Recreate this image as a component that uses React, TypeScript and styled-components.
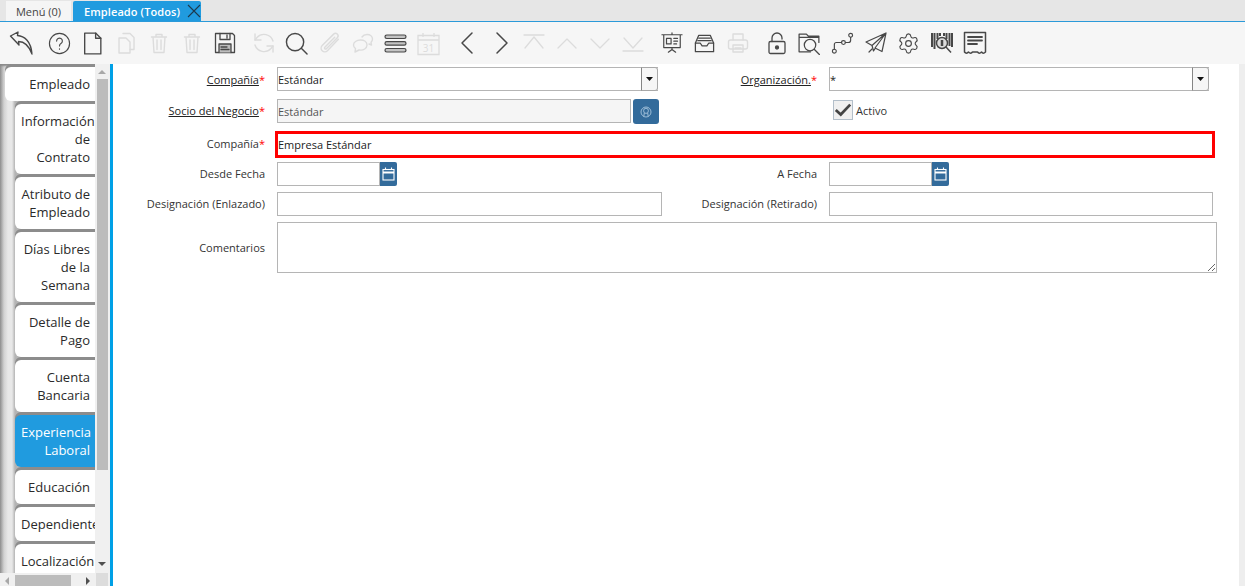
import React from 'react';
import styled, { createGlobalStyle, css } from 'styled-components';
import { Settings } from 'lucide-react';

const GlobalStyle = createGlobalStyle`
  html, body, #root {
    margin: 0;
    height: 100%;
    overflow: hidden;
  }
  body {
    font-family: 'Open Sans', 'Liberation Sans', sans-serif;
    background: #fff;
  }
`;

const Page = styled.div`
  height: 586px;
  display: flex;
  flex-direction: column;
`;

const TabBar = styled.div`
  height: 21px;
  flex: none;
  display: flex;
  align-items: flex-end;
  padding-left: 6px;
  gap: 2px;
  background: #e6e6e6;
  border-bottom: 1px solid #2b9ad9;
`;

const WindowTab = styled.div<{ $active?: boolean }>`
  height: 20px;
  display: flex;
  align-items: center;
  font-size: 11px;
  ${(p) =>
    p.$active
      ? css`
          width: 128px;
          padding-left: 11px;
          box-sizing: border-box;
          background: #209bdf;
          color: #fff;
          font-weight: 600;
          letter-spacing: 0.1px;
          border-radius: 2px 2px 0 0;
        `
      : css`
          width: 65px;
          justify-content: center;
          background: #f5f5f5;
          color: #444;
        `}
`;

const CloseButton = styled.span`
  margin-left: auto;
  display: flex;
  color: #1c3a4d;
`;

const Toolbar = styled.div`
  height: 42px;
  flex: none;
  display: flex;
  align-items: center;
  padding-left: 4px;
  background: #f6f6f6;
`;

const ToolGroup = styled.div`
  display: flex;
  margin-right: 6px;
`;

const ToolButton = styled.span<{ $off?: boolean }>`
  width: 33px;
  height: 34px;
  display: flex;
  align-items: center;
  justify-content: center;
  color: ${(p) => (p.$off ? '#dcdcdc' : '#484848')};
`;

const Main = styled.div`
  flex: 1;
  min-height: 0;
  display: flex;
`;

const Side = styled.div`
  width: 110px;
  flex: none;
  display: grid;
  grid-template-columns: 96px 12px;
  grid-template-rows: 509px 13px;
  background: #f0f0f0;
`;

const TabList = styled.div`
  overflow: hidden;
  box-sizing: border-box;
  padding-top: 3px;
  display: flex;
  flex-direction: column;
  gap: 3px;
  border-right: 1px solid #f0f0f0;
  background: linear-gradient(90deg, #8e8e8e 0, #d2d2d2 4px, #e8e8e8 8px, #e8e8e8 12px, #b4b4b4 15px);
  box-shadow: inset 0 3px 2px -1px #8a8a8a;
`;

const DetailTab = styled.div<{ $active?: boolean; $first?: boolean }>`
  flex: none;
  box-sizing: border-box;
  margin-left: ${(p) => (p.$first ? '5px' : '15px')};
  width: ${(p) => (p.$first ? '90px' : '80px')};
  padding: 8px 5px 8px 6px;
  font-size: 13px;
  line-height: 18px;
  text-align: right;
  border-radius: 6px 0 0 6px;
  background: ${(p) => (p.$active ? '#209bdf' : '#fff')};
  color: ${(p) => (p.$active ? '#fff' : '#2a2a2a')};
  font-weight: ${(p) => (p.$active ? 500 : 400)};
  box-shadow: 0 -3px 0 #8c8c8c;
`;

const VScroll = styled.div`
  display: flex;
  flex-direction: column;
  align-items: center;
  justify-content: space-between;
  position: relative;
  background: #f0f0f0;
  padding: 6px 0 7px;
  box-sizing: border-box;
`;

const VThumb = styled.div`
  position: absolute;
  top: 15px;
  left: 1px;
  width: 11px;
  height: 391px;
  background: #bcbcbc;
`;

const HScroll = styled.div`
  display: flex;
  align-items: center;
  justify-content: space-between;
  position: relative;
  background: #f0f0f0;
  padding: 2px 6px 0 5px;
  box-sizing: border-box;
`;

const HThumb = styled.div`
  position: absolute;
  left: 15px;
  top: 2px;
  width: 56px;
  height: 11px;
  background: #bcbcbc;
`;

const Corner = styled.div`
  background: #dcdcdc;
`;

const Arrow = styled.span<{ $dir: 'up' | 'down' | 'left' | 'right'; $off?: boolean }>`
  width: 0;
  height: 0;
  border: 4px solid transparent;
  ${(p) => {
    const color = p.$off ? '#a8a8a8' : '#505050';
    if (p.$dir === 'up') return `border-bottom-color: ${color}; border-top-width: 0;`;
    if (p.$dir === 'down') return `border-top-color: ${color}; border-bottom-width: 0;`;
    if (p.$dir === 'left') return `border-right-color: ${color}; border-left-width: 0;`;
    return `border-left-color: ${color}; border-right-width: 0;`;
  }}
`;

const Content = styled.div`
  flex: 1;
  min-width: 0;
  border-left: 3px solid #00a0e6;
  border-right: 6px solid #eeeeee;
  padding-top: 3px;
  background: #fff;
`;

const Row = styled.div<{ $after: number }>`
  display: grid;
  grid-template-columns: 164px 385px 167px 1fr;
  align-items: center;
  margin-bottom: ${(p) => p.$after}px;
`;

const Label = styled.label<{ $link?: boolean; $second?: boolean; $raise?: boolean }>`
  font-size: 11px;
  color: #333;
  text-align: right;
  padding-right: 12px;
  padding-bottom: ${(p) => (p.$raise ? '2px' : '0')};
  span:first-child {
    text-decoration: ${(p) => (p.$link ? 'underline' : 'none')};
    color: ${(p) => (p.$link ? '#222' : '#333')};
  }
`;

const Required = styled.span`
  color: #f00;
`;

const Combo = styled.div<{ $width: number }>`
  width: ${(p) => p.$width}px;
  height: 24px;
  box-sizing: border-box;
  display: flex;
  align-items: center;
  border: 1px solid #b5b5b5;
  border-right: none;
  font-size: 11px;
  color: #222;
  > span:first-child {
    flex: 1;
  }
`;

const ComboButton = styled.span`
  width: 17px;
  height: 24px;
  flex: none;
  box-sizing: border-box;
  display: flex;
  align-items: center;
  justify-content: center;
  background: #f6f6f6;
  border: 1px solid #a8a8a8;
  border-left-color: #858585;
  border-radius: 0 3px 3px 0;
`;

const TextField = styled.input<{ $width: number; $locked?: boolean }>`
  width: ${(p) => p.$width}px;
  height: 24px;
  box-sizing: border-box;
  margin: 0;
  padding: 0;
  border: 1px solid #b5b5b5;
  border-radius: 0;
  outline: none;
  font-family: inherit;
  font-size: 11px;
  color: ${(p) => (p.$locked ? '#555' : '#222')};
  background: ${(p) => (p.$locked ? '#f5f5f5' : '#fff')};
`;

const HighlightField = styled.input`
  width: 940px;
  height: 27px;
  margin: 0 0 0 -2px;
  padding: 0;
  box-sizing: border-box;
  border: 3px solid #f00;
  border-radius: 0;
  outline: none;
  font-family: inherit;
  font-size: 11px;
  color: #222;
  background: #fff;
  grid-column: 2 / 5;
`;

const Notes = styled.textarea`
  width: 940px;
  height: 51px;
  display: block;
  margin: 0;
  padding: 0;
  box-sizing: border-box;
  border: 1px solid #b5b5b5;
  border-radius: 0;
  outline: none;
  font-family: inherit;
  font-size: 11px;
  grid-column: 2 / 5;
`;

const Inline = styled.div`
  display: flex;
  align-items: flex-start;
`;

const SearchButton = styled.span`
  width: 26px;
  height: 25px;
  margin-left: 2px;
  display: flex;
  align-items: center;
  justify-content: center;
  background: #336b9b;
  border-radius: 3px;
  color: #a9c6de;
`;

const DateButton = styled.span`
  width: 17px;
  height: 24px;
  flex: none;
  display: flex;
  align-items: center;
  justify-content: center;
  background: #336b9b;
  border-radius: 0 2px 2px 0;
  color: #fff;
`;

const CheckRow = styled.div`
  display: flex;
  align-items: center;
  grid-column: 4;
  margin: 0 0 3px 4px;
  font-size: 11px;
  color: #333;
  gap: 3px;
`;

const CheckBox = styled.span`
  width: 20px;
  height: 20px;
  box-sizing: border-box;
  display: flex;
  align-items: center;
  justify-content: center;
  background: #f0f0f0;
  border: 1px solid #b3bfca;
  color: #444;
`;

type IconProps = { children: React.ReactNode; size?: number; sw?: number };

// line icons share one frame, everything is drawn in a 24 box
const Ico = ({ children, size = 24, sw = 1.4 }: IconProps) => (
  <svg width={size} height={size} viewBox="0 0 24 24" fill="none" stroke="currentColor" strokeWidth={sw} strokeLinecap="round" strokeLinejoin="round">
    {children}
  </svg>
);

const TrashShape = () => (
  <>
    <path d="M4.500 6h15M9 6V3.500h6V6M6 6l1 15.500h10L18 6" />
    <path d="M10 9v9.500M14 9v9.500" />
  </>
);

const tools: { key: string; off?: boolean; icon: React.ReactNode }[][] = [
  [
    {
      key: 'back',
      icon: (
        <svg width="24" height="24" viewBox="0 0 24 24" fill="none" stroke="currentColor" strokeWidth="1.400" strokeLinejoin="round">
          <path d="M1.500 5 9 1l-.5 3.500C15 5 22 10 23 23c-3-8-8-12.500-13.500-12.500l.5 3.500z" />
        </svg>
      ),
    },
  ],
  [
    { key: 'help', icon: <Ico size={23} sw={1.2}><circle cx="12" cy="12" r="10.500" /><path d="M9 9.500a3 3 0 1 1 4.500 2.600c-1 .6-1.500 1.200-1.500 2.400" /><path d="M12 17.500v.4" /></Ico> },
    { key: 'new', icon: <Ico size={25} sw={1.3}><path d="M4.500 2h10.500l5 5v15H4.500z" /><path d="M15 2v5h5" /></Ico> },
    { key: 'copy', off: true, icon: <Ico size={24} sw={1.4}><path d="M9 2.500h7l4 4v12h-4" /><path d="M5 7h7l4 4v11H5z" /></Ico> },
    { key: 'delete', off: true, icon: <Ico size={24}><TrashShape /></Ico> },
    { key: 'deleteAll', off: true, icon: <Ico size={24}><TrashShape /></Ico> },
    { key: 'save', icon: <Ico size={24} sw={1.3}><path d="M2.500 2.500h17l2 2v17h-19z" /><path d="M7 2.500v6h10v-6M14 4v3" /><path d="M6 21.500v-8.500h12v8.500" fill="#bdbdbd" /><path d="M8 16h6M8 18.500h8" /></Ico> },
  ],
  [
    { key: 'refresh', off: true, icon: <Ico size={24} sw={1.4}><path d="M21 10A9.500 9.500 0 0 0 5 6.500L3 9" /><path d="M3 3v6h6" /><path d="M3 14a9.500 9.500 0 0 0 16 3.500l2-2.500" /><path d="M21 21v-6h-6" /></Ico> },
    { key: 'find', icon: <Ico size={23} sw={1.500}><circle cx="10.500" cy="10.500" r="9" /><path d="m17 17 6 6" /></Ico> },
    { key: 'attach', off: true, icon: <Ico size={25} sw={1.400}><path d="m20.500 8-10.500 11a3.500 3.500 0 0 1-5-5L16 3a2.400 2.400 0 0 1 3.500 3.400L9 17a1 1 0 0 1-1.500-1.500L17 6" /></Ico> },
    { key: 'chat', off: true, icon: <Ico size={24} sw={1.400}><path d="M9.500 9c-4 0-7 2.300-7 5 0 1.500.8 2.700 2 3.600L4 21l4-2c4.500.8 8-1.800 8-5s-3-5-6.500-5z" /><path d="M11 6c1-1.500 3-2.500 5-2.500 3.200 0 5.500 2 5.500 4.500 0 1.300-.6 2.300-1.500 3.200l.5 2.800-2.500-1" /></Ico> },
    { key: 'menu', icon: <svg width="23" height="19" viewBox="0 0 23 19" fill="#c4c4c4" stroke="#484848" strokeWidth="1.200"><rect x="1" y="1" width="21" height="3.500" rx="1.700" /><rect x="1" y="7.700" width="21" height="3.500" rx="1.700" /><rect x="1" y="14.500" width="21" height="3.500" rx="1.700" /></svg> },
    { key: 'calendar', off: true, icon: <svg width="25" height="25" viewBox="0 0 25 25" fill="none" stroke="currentColor" strokeWidth="1.300"><path d="M2 4.500h21v19H2zM2 9h21M7 2v4M18 2v4" /><text x="12.500" y="20.500" fontSize="10" textAnchor="middle" fill="currentColor" stroke="none" fontFamily="Open Sans">31</text></svg> },
  ],
  [
    { key: 'prev', icon: <Ico size={24} sw={1.500}><path d="m16 2-10 10 10 10" /></Ico> },
    { key: 'next', icon: <Ico size={24} sw={1.500}><path d="m8 2 10 10-10 10" /></Ico> },
    { key: 'first', off: true, icon: <Ico size={24} sw={1.300}><path d="M2 4h20M3 17 12 6l9 11" /></Ico> },
    { key: 'up', off: true, icon: <Ico size={24} sw={1.300}><path d="m3 17 9-9 9 9" /></Ico> },
    { key: 'down', off: true, icon: <Ico size={24} sw={1.300}><path d="m3 8 9 9 9-9" /></Ico> },
    { key: 'last', off: true, icon: <Ico size={24} sw={1.300}><path d="M2 20h20M3 7l9 10 9-10" /></Ico> },
  ],
  [
    { key: 'board', icon: <Ico size={22} sw={1.300}><path d="M1 3h22M3 3v14h18V3M12 1v2M12 17v2M8 22l4-3 4 3" /><path d="M6 7h5v6H6zM14 7h4M14 10h4M14 13h3" /></Ico> },
    { key: 'inbox', icon: <Ico size={23} sw={1.300}><path d="M6 3.500h12l3.500 8v9H2.500v-9z" /><path d="M2.500 11.500h5l2 3h5l2-3h5" /><path d="M6 6.500h12M5 9h14" /></Ico> },
    { key: 'print', off: true, icon: <Ico size={24} sw={1.400}><path d="M7 9V3h10v6" /><rect x="2.500" y="9" width="19" height="9" rx="2" /><path d="M7 14h10v7H7zM9 17h6" /></Ico> },
  ],
  [
    { key: 'lock', icon: <Ico size={24} sw={1.300}><rect x="4" y="10.500" width="16" height="12" rx="1.500" /><path d="M7 10.500V7a5 5 0 0 1 10 0v1" /><circle cx="12" cy="16.500" r="1.500" fill="currentColor" /></Ico> },
    { key: 'archive', icon: <Ico size={25} sw={1.200}><path d="M2 20V3h7l2 2h10v6M2 6h19M2 20h11" /><circle cx="12.500" cy="13.500" r="5.500" /><path d="m16.500 17.500 5 5" /></Ico> },
    { key: 'route', icon: <Ico size={23} sw={1.200}><circle cx="3.500" cy="20" r="2" /><circle cx="13" cy="11" r="2" /><circle cx="20.500" cy="3.500" r="2" /><path d="M3.500 18v-5a2 2 0 0 1 2-2H11M15 11h3a2.500 2.500 0 0 0 2.500-2.500V5.500" /></Ico> },
    { key: 'send', icon: <Ico size={24} sw={1.200}><path d="M22 2 2 11l6 3.500L22 2 11 17l7 3.500zM8 14.500 9.500 20l2-3" /><path d="m5 21 3-3" /></Ico> },
    { key: 'settings', icon: <Settings size={23} strokeWidth={1.200} /> },
    { key: 'barcode', icon: <svg width="22" height="22" viewBox="0 0 22 22" fill="none" stroke="#484848"><path d="M1 1v14M3.500 1v16M6.500 1v6M15.500 1v6M18.500 1v13M21 1v14" strokeWidth="2" /><path d="M9 1v3M13 1v3" strokeWidth="2" /><circle cx="11" cy="11" r="5.500" strokeWidth="1.500" fill="#ddd" /><path d="M11 8v6" strokeWidth="2.500" /><path d="m15 15 5 5.500" strokeWidth="1.500" /></svg> },
    { key: 'receipt', icon: <Ico size={24} sw={1.500}><path d="M1.500 1.500h21v19.500c-1.500 1.500-3 1.500-4 0-1.500 1.500-3 1.500-4 0h-5c-1 1.500-2.500 1.500-4 0-1 1.500-3 1.500-4 0z" /><path d="M5 6h14M5 9.500h14M5 13h9" strokeWidth="1.800" /></Ico> },
  ],
];

const detailTabs = [
  'Empleado',
  'Información de Contrato',
  'Atributo de Empleado',
  'Días Libres de la Semana',
  'Detalle de Pago',
  'Cuenta Bancaria',
  'Experiencia Laboral',
  'Educación',
  'Dependiente',
  'Localización',
];

const ComboArrow = () => (
  <svg width="7" height="4" viewBox="0 0 7 4">
    <path d="M0 0h7L3.500 4z" fill="#111" />
  </svg>
);

const CalendarGlyph = () => (
  <svg width="13" height="14" viewBox="0 0 13 14" fill="none" stroke="currentColor" strokeWidth="1.100">
    <rect x="1" y="2.500" width="11" height="10.500" />
    <path d="M1 5.500h11" strokeWidth="2" />
    <path d="M3.500 0.500v2.500M9.500 0.500v2.500" />
  </svg>
);

export default function App() {
  return (
    <Page>
      <GlobalStyle />
      <TabBar>
        <WindowTab>Menú (0)</WindowTab>
        <WindowTab $active>
          Empleado (Todos)
          <CloseButton>
            <svg width="14" height="14" viewBox="0 0 14 14" stroke="currentColor" strokeWidth="1.100">
              <path d="m1 1 12 12M13 1 1 13" />
            </svg>
          </CloseButton>
        </WindowTab>
      </TabBar>
      <Toolbar>
        {tools.map((group) => (
          <ToolGroup key={group[0].key}>
            {group.map((tool) => (
              <ToolButton key={tool.key} $off={tool.off}>
                {tool.icon}
              </ToolButton>
            ))}
          </ToolGroup>
        ))}
      </Toolbar>
      <Main>
        <Side>
          <TabList>
            {detailTabs.map((name, i) => (
              <DetailTab key={name} $first={i === 0} $active={name === 'Experiencia Laboral'}>
                {name}
              </DetailTab>
            ))}
          </TabList>
          <VScroll>
            <VThumb />
            <Arrow $dir="up" $off />
            <Arrow $dir="down" />
          </VScroll>
          <HScroll>
            <HThumb />
            <Arrow $dir="left" $off />
            <Arrow $dir="right" />
          </HScroll>
          <Corner />
        </Side>
        <Content>
          <Row $after={8}>
            <Label $link>
              <span>Compañía</span>
              <Required>*</Required>
            </Label>
            <Combo $width={381}>
              <span>Estándar</span>
              <ComboButton>
                <ComboArrow />
              </ComboButton>
            </Combo>
            <Label $link $second>
              <span>Organización.</span>
              <Required>*</Required>
            </Label>
            <Combo $width={380}>
              <span>*</span>
              <ComboButton>
                <ComboArrow />
              </ComboButton>
            </Combo>
          </Row>
          <Row $after={7}>
            <Label $link $raise>
              <span>Socio del Negocio</span>
              <Required>*</Required>
            </Label>
            <Inline>
              <TextField $width={354} $locked readOnly value="Estándar" />
              <SearchButton>
                <svg width="12" height="12" viewBox="0 0 12 12" fill="none" stroke="currentColor" strokeWidth="0.900">
                  <circle cx="6" cy="6" r="5" />
                  <ellipse cx="6" cy="4.800" rx="2.400" ry="2.600" />
                  <path d="M4.300 7 3.800 10.500M7.700 7l.5 3.500" />
                </svg>
              </SearchButton>
            </Inline>
            <span />
            <CheckRow>
              <CheckBox>
                <svg width="20" height="16" viewBox="0 0 20 16" fill="none" stroke="currentColor" strokeWidth="3">
                  <path d="m2 8 5.500 5L18 2" />
                </svg>
              </CheckBox>
              Activo
            </CheckRow>
          </Row>
          <Row $after={4}>
            <Label $raise>
              <span>Compañía</span>
              <Required>*</Required>
            </Label>
            <HighlightField readOnly value="Empresa Estándar" />
          </Row>
          <Row $after={6}>
            <Label $raise>
              <span>Desde Fecha</span>
            </Label>
            <Inline>
              <TextField $width={103} readOnly />
              <DateButton>
                <CalendarGlyph />
              </DateButton>
            </Inline>
            <Label $second $raise>
              <span>A Fecha</span>
            </Label>
            <Inline>
              <TextField $width={103} readOnly />
              <DateButton>
                <CalendarGlyph />
              </DateButton>
            </Inline>
          </Row>
          <Row $after={6}>
            <Label $raise>
              <span>Designación (Enlazado)</span>
            </Label>
            <TextField $width={385} readOnly />
            <Label $second $raise>
              <span>Designación (Retirado)</span>
            </Label>
            <TextField $width={384} readOnly />
          </Row>
          <Row $after={0}>
            <Label>
              <span>Comentarios</span>
            </Label>
            <Notes readOnly />
          </Row>
        </Content>
      </Main>
    </Page>
  );
}
